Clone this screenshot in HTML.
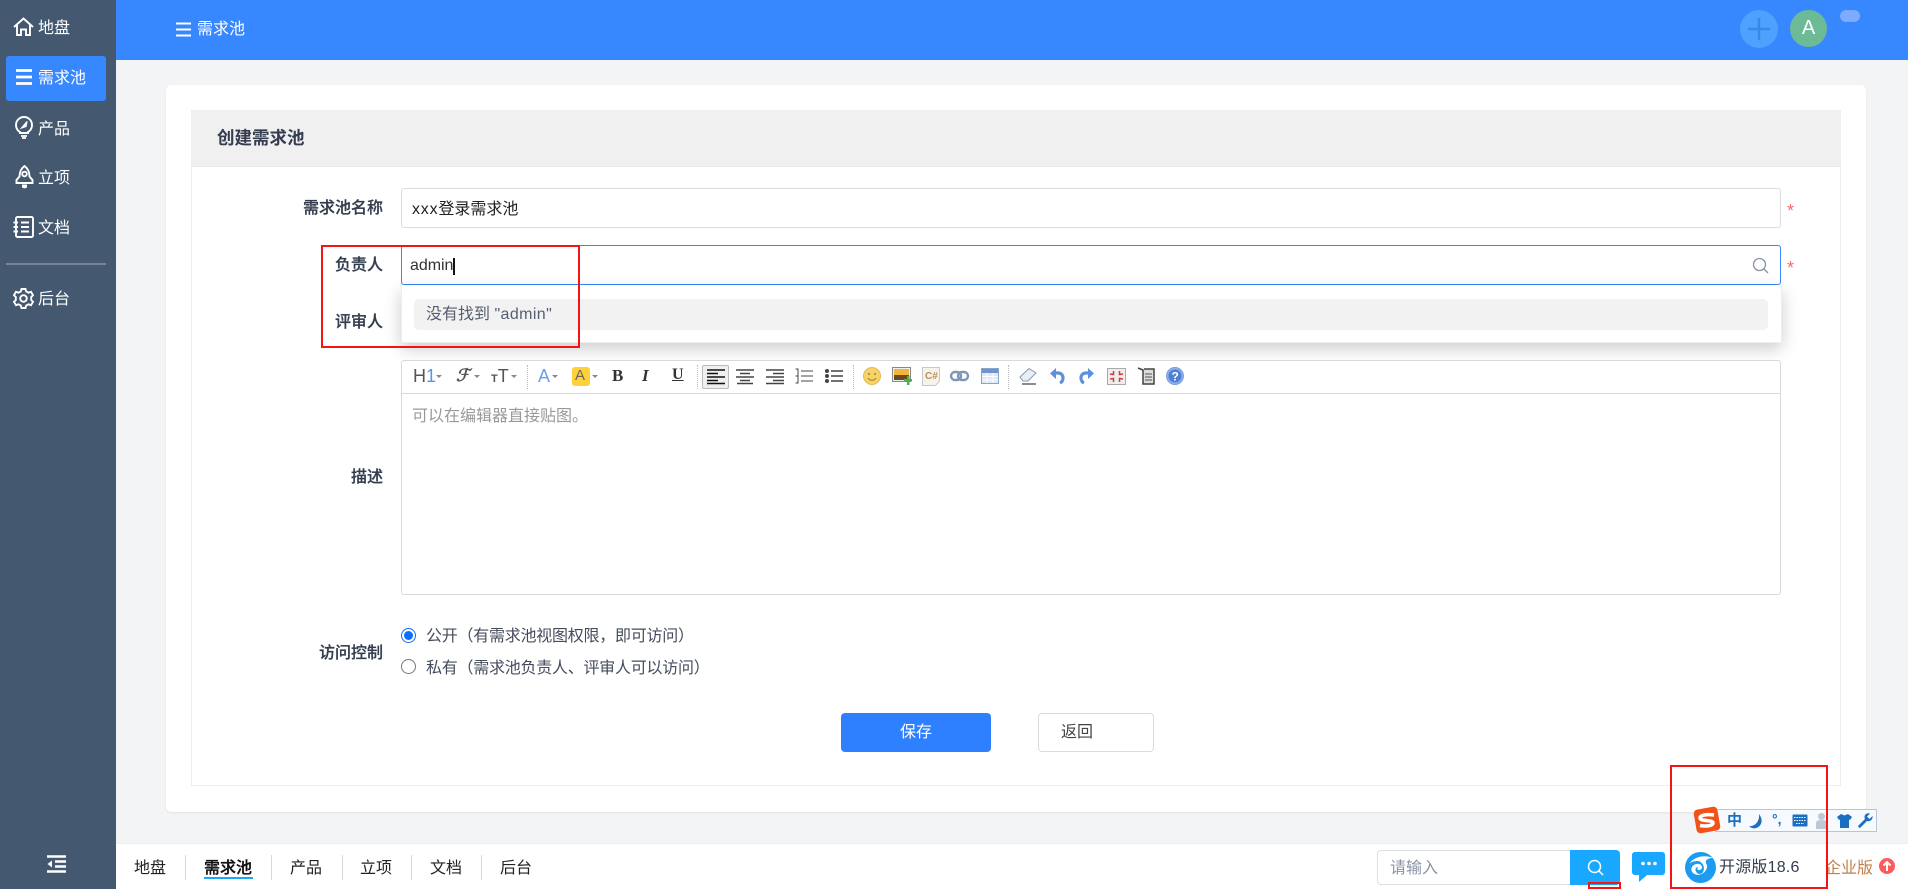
<!DOCTYPE html>
<html lang="zh-CN">
<head>
<meta charset="utf-8">
<title>创建需求池</title>
<style>
*{box-sizing:border-box;margin:0;padding:0}
html,body{width:1908px;height:889px;overflow:hidden;background:#f3f4f6}
body{position:relative;font-family:"Liberation Sans","Noto Sans CJK SC",sans-serif;font-size:16px;color:#333}
.a{position:absolute}
.t{position:absolute;line-height:24px;height:24px;white-space:nowrap;margin-top:1px}
.l{position:absolute;right:1525px;line-height:24px;height:24px;white-space:nowrap;font-weight:500;color:#333d4d;-webkit-text-stroke:.25px #333d4d;margin-top:2px}
svg{position:absolute;overflow:visible}
.nav{color:#fff;margin-top:2px}
.foot{color:#222}
.sep{position:absolute;width:1px;top:855px;height:25px;background:#d8d8d8}
.ts{position:absolute;top:365px;width:1px;height:24px;border-left:1px dotted #bbb}
.car{position:absolute;width:0;height:0;border-left:3px solid transparent;border-right:3px solid transparent;border-top:3px solid #888;top:375px}
</style>
</head>
<body>
<!-- sidebar -->
<div class="a" style="left:0;top:0;width:116px;height:889px;background:#44586f"></div>
<div class="a" style="left:6px;top:56px;width:100px;height:45px;background:#3787ff;border-radius:3px"></div>
<svg style="left:13px;top:17px" width="21" height="20" viewBox="0 0 21 20" fill="none" stroke="#fff" stroke-width="1.900"><path d="M1 10L10.500 1.500L20 10M4 8V18H8V12.500H13V18H17V8"/></svg>
<div class="t nav" style="left:38px;top:15px">地盘</div>
<svg style="left:16px;top:69px" width="16" height="16" viewBox="0 0 16 16" fill="none" stroke="#fff" stroke-width="2.800"><path d="M0 1.500H16M0 8H16M0 14.500H16"/></svg>
<div class="t nav" style="left:38px;top:65px">需求池</div>
<svg style="left:15px;top:116px" width="18" height="23" viewBox="0 0 18 23" fill="none" stroke="#fff" stroke-width="1.900"><path d="M5 16C2.500 14.500 1 12 1 9A8 8 0 0 1 17 9C17 12 15.500 14.500 13 16V17H5Z"/><path d="M6 20H12M7 22H11" stroke-width="1.800"/><path d="M6.500 12L12 5.500L11 10.500Z" fill="#fff" stroke-width="1.200"/></svg>
<div class="t nav" style="left:38px;top:116px">产品</div>
<svg style="left:15px;top:165px" width="19" height="24" viewBox="0 0 19 24" fill="none" stroke="#fff" stroke-width="1.900"><path d="M9.500 1C13.500 4 14.500 8 14.500 11.500L17.500 15V18H1.500V15L4.500 11.500C4.500 8 5.500 4 9.500 1Z"/><circle cx="9.500" cy="9" r="2.300"/><path d="M7 19.500H12V22.500L9.500 23.500L7 22.500Z" fill="#fff" stroke="none"/></svg>
<div class="t nav" style="left:38px;top:165px">立项</div>
<svg style="left:13px;top:216px" width="21" height="22" viewBox="0 0 21 22" fill="none" stroke="#fff" stroke-width="1.900"><rect x="3" y="1" width="17" height="20" rx="1.500"/><path d="M8 6.500H16M8 11H16M8 15.500H16M0.500 6.500H5M0.500 11H5M0.500 15.500H5"/></svg>
<div class="t nav" style="left:38px;top:215px">文档</div>
<div class="a" style="left:6px;top:263px;width:100px;height:2px;background:#748498"></div>
<svg style="left:13px;top:288px" width="21" height="21" viewBox="0 0 21 21" fill="none" stroke="#fff" stroke-width="1.900"><path d="M8.500 1H12.500L13.200 3.500L15.500 4.700L18 3.800L20 7.200L18.200 9V12L20 13.800L18 17.200L15.500 16.300L13.200 17.500L12.500 20H8.500L7.800 17.500L5.500 16.300L3 17.200L1 13.800L2.800 12V9L1 7.200L3 3.800L5.500 4.700L7.800 3.500Z"/><circle cx="10.500" cy="10.500" r="3.300"/></svg>
<div class="t nav" style="left:38px;top:286px">后台</div>
<svg style="left:47px;top:855px" width="19" height="18" viewBox="0 0 19 18" fill="none" stroke="#fff" stroke-width="2.400"><path d="M0 1.500H19M8 6.500H19M8 11.500H19M0 16.500H19"/><path d="M5 5.500V12.500L0.500 9Z" fill="#fff" stroke="none"/></svg>

<!-- header -->
<div class="a" style="left:116px;top:0;width:1792px;height:60px;background:#3787ff"></div>
<svg style="left:176px;top:22px" width="15" height="15" viewBox="0 0 15 15" fill="none" stroke="#fff" stroke-width="2"><path d="M0 1.500H15M0 7.500H15M0 13.500H15"/></svg>
<div class="t" style="left:197px;top:17px;color:#fff">需求池</div>
<div class="a" style="left:1740px;top:10px;width:38px;height:38px;border-radius:50%;background:#4ea1ff"></div>
<svg style="left:1748px;top:18px" width="22" height="22" viewBox="0 0 22 22" fill="none" stroke="#3a87ea" stroke-width="2.400"><path d="M11 0V22M0 11H22"/></svg>
<div class="a" style="left:1790px;top:10px;width:37px;height:37px;border-radius:50%;background:#6dba96;color:#fff;text-align:center;line-height:37px;font-size:20px">A</div>
<div class="a" style="left:1840px;top:10px;width:20px;height:12px;border-radius:6px;background:#7cabff"></div>

<!-- card -->
<div class="a" style="left:166px;top:85px;width:1700px;height:727px;background:#fff;border-radius:5px;box-shadow:0 1px 2px rgba(0,0,0,.08)"></div>
<div class="a" style="left:191px;top:110px;width:1650px;height:676px;border:1px solid #eceef0;background:#fff"></div>
<div class="a" style="left:191px;top:110px;width:1650px;height:57px;background:#f0f0f0;border-bottom:1px solid #e8e8e8"></div>
<div class="t" style="left:217px;top:125px;font-size:17.500px;font-weight:bold;color:#333d4d">创建需求池</div>

<!-- form -->
<div class="l" style="top:195px">需求池名称</div>
<div class="a" style="left:401px;top:188px;width:1380px;height:40px;border:1px solid #dcdcdc;border-radius:3px;background:#fff"></div>
<div class="t" style="left:412px;top:197px;color:#222"><span style="letter-spacing:.8px">xxx</span>登录需求池</div>
<div class="t" style="left:1787px;top:198px;color:#f56c6c;font-size:18px">*</div>

<div class="l" style="top:252px">负责人</div>
<div class="l" style="top:309px">评审人</div>
<div class="a" style="left:401px;top:245px;width:1380px;height:40px;border:1px solid #3787ff;border-radius:3px;background:#fff"></div>
<div class="t" style="left:410px;top:253px;color:#333;letter-spacing:-.05px">admin</div>
<div class="a" style="left:453px;top:258px;width:2px;height:17px;background:#111"></div>
<svg style="left:1752px;top:257px" width="17" height="17" viewBox="0 0 17 17" fill="none" stroke="#8a93a0" stroke-width="1.300"><circle cx="7.500" cy="7.500" r="6"/><path d="M12 12L16 16"/></svg>
<div class="t" style="left:1787px;top:255px;color:#f56c6c;font-size:18px">*</div>

<div class="a" style="left:401px;top:285px;width:1381px;height:58px;background:#fff;border:1px solid #eee;border-top:0;box-shadow:0 6px 16px rgba(0,0,0,.2)"></div>
<div class="a" style="left:414px;top:299px;width:1354px;height:31px;background:#f2f2f2;border-radius:5px"></div>
<div class="t" style="left:426px;top:302px;color:#555f70">没有找到 <span style="letter-spacing:.4px">"admin"</span></div>

<!-- editor -->
<div class="l" style="top:464px">描述</div>
<div class="a" style="left:401px;top:360px;width:1380px;height:235px;border:1px solid #d9d9d9;border-radius:3px;background:#fff"></div>
<div class="a" style="left:402px;top:393px;width:1378px;height:1px;background:#d9d9d9"></div>
<div class="t" style="left:412px;top:404px;color:#999">可以在编辑器直接贴图。</div>

<!-- toolbar -->
<div class="t" style="left:413px;top:363px;font-size:18px;color:#555">H<span style="color:#5a94e8">1</span></div><div class="car" style="left:436px"></div>
<div class="t" style="left:456px;top:363px;font-size:17px;font-style:italic;font-family:'Liberation Serif',serif;color:#555;font-weight:bold">ℱ</div><div class="car" style="left:474px"></div>
<div class="t" style="left:491px;top:363px;font-size:18px;color:#555"><span style="font-size:11px;font-weight:bold">T</span>T</div><div class="car" style="left:511px"></div>
<div class="ts" style="left:527px"></div>
<div class="t" style="left:538px;top:363px;font-size:18px;color:#6a9ef0">A</div><div class="car" style="left:552px"></div>
<div class="a" style="left:572px;top:367px;width:18px;height:19px;border-radius:3px;background:#ffd138"></div>
<div class="t" style="left:575px;top:363px;font-size:15px;color:#666">A</div><div class="car" style="left:592px"></div>
<div class="t" style="left:612px;top:363px;font-size:17px;font-weight:bold;font-family:'Liberation Serif',serif;color:#333">B</div>
<div class="t" style="left:642px;top:363px;font-size:17px;font-weight:bold;font-style:italic;font-family:'Liberation Serif',serif;color:#333">I</div>
<div class="t" style="left:672px;top:362px;font-size:16px;font-weight:bold;text-decoration:underline;font-family:'Liberation Serif',serif;color:#333">U</div>
<div class="ts" style="left:697px"></div>
<div class="a" style="left:702px;top:365px;width:27px;height:24px;background:#efefef;border:1px solid #bbb;border-radius:2px"></div>
<svg style="left:707px;top:369px" width="18" height="15" viewBox="0 0 18 15" fill="none" stroke="#111" stroke-width="1.500"><path d="M0 1H18M0 4.500H11M0 8H18M0 11.500H11M0 14.500H18"/></svg>
<svg style="left:736px;top:369px" width="18" height="15" viewBox="0 0 18 15" fill="none" stroke="#444" stroke-width="1.400"><path d="M0 1H18M4 4.500H14M0 8H18M4 11.500H14M1 14.500H17"/></svg>
<svg style="left:766px;top:369px" width="18" height="15" viewBox="0 0 18 15" fill="none" stroke="#444" stroke-width="1.400"><path d="M0 1H18M7 4.500H18M0 8H18M7 11.500H18M0 14.500H18"/></svg>
<svg style="left:795px;top:368px" width="18" height="16" viewBox="0 0 18 16" fill="none" stroke="#444" stroke-width="1.400"><path d="M6 3H18M6 8H18M6 13H18M0.500 1H3V15H0.500M0.500 8H3" stroke-width="1"/></svg>
<svg style="left:825px;top:368px" width="18" height="16" viewBox="0 0 18 16" fill="none" stroke="#444" stroke-width="1.400"><path d="M6 3H18M6 8H18M6 13H18"/><circle cx="2" cy="3" r="2" fill="#444" stroke="none"/><circle cx="2" cy="8" r="2" fill="#444" stroke="none"/><circle cx="2" cy="13" r="2" fill="#444" stroke="none"/></svg>
<div class="ts" style="left:853px"></div>
<svg style="left:863px;top:367px" width="18" height="18" viewBox="0 0 18 18"><circle cx="9" cy="9" r="8.500" fill="#f5d26a" stroke="#e6bb50"/><circle cx="6" cy="7" r="1" fill="#a07a20"/><circle cx="12" cy="7" r="1" fill="#a07a20"/><path d="M5 11C7 14 11 14 13 11" fill="none" stroke="#a07a20"/></svg>
<svg style="left:892px;top:367px" width="20" height="19" viewBox="0 0 20 19"><rect x="0.500" y="0.500" width="18" height="14" fill="#eee" stroke="#888"/><rect x="2" y="2" width="15" height="6" fill="#f5b53a"/><rect x="2" y="8" width="15" height="5" fill="#6a4a20"/><path d="M15 9H17.500V12H20V14.500H17.500V18H15V14.500H12V12H15Z" fill="#4caf50"/></svg>
<svg style="left:922px;top:367px" width="18" height="19" viewBox="0 0 18 19"><path d="M0.500 0.500H17.500V14L13.500 18.500H0.500Z" fill="#f6f3ec" stroke="#c8c8c8"/><text x="3" y="12" font-size="10" font-weight="bold" font-family="Liberation Sans" fill="#b89058">C#</text></svg>
<svg style="left:950px;top:370px" width="19" height="12" viewBox="0 0 19 12" fill="none" stroke="#7d95b8" stroke-width="2.400"><rect x="1" y="2" width="10" height="8" rx="4"/><rect x="8" y="2" width="10" height="8" rx="4"/></svg>
<svg style="left:981px;top:368px" width="18" height="16" viewBox="0 0 18 16"><rect x="0.500" y="0.500" width="17" height="15" fill="#dfe8f5" stroke="#8aa4cc"/><rect x="1" y="1" width="16" height="4" fill="#6f93cf"/><path d="M6 5V15M12 5V15M1 8.500H17M1 12H17" stroke="#fff" fill="none"/></svg>
<div class="ts" style="left:1008px"></div>
<svg style="left:1019px;top:367px" width="18" height="18" viewBox="0 0 18 18"><path d="M1 10L10 1.500L17 6L9 14H4Z" fill="#e8eef6" stroke="#8a9ab0"/><path d="M3 17H17" stroke="#666" stroke-width="1.500"/></svg>
<svg style="left:1049px;top:368px" width="16" height="16" viewBox="0 0 16 16" fill="none" stroke="#5f8fd8" stroke-width="3.200"><path d="M4 5H9C12 5 14 7 14 10C14 12 13 14 11 15"/><path d="M7 0L1 5.500L7 11" fill="#5f8fd8" stroke="none"/></svg>
<svg style="left:1079px;top:368px" width="16" height="16" viewBox="0 0 16 16" fill="none" stroke="#5f8fd8" stroke-width="3.200"><path d="M12 5H7C4 5 2 7 2 10C2 12 3 14 5 15"/><path d="M9 0L15 5.500L9 11" fill="#5f8fd8" stroke="none"/></svg>
<svg style="left:1107px;top:368px" width="19" height="17" viewBox="0 0 19 17"><rect x="0.500" y="0.500" width="18" height="16" fill="#f1eded" stroke="#aaa"/><path d="M3 6L6.500 6.500L6.500 3M16 6L12.500 6.500L12.500 3M3 11L6.500 10.500L6.500 14M16 11L12.500 10.500L12.500 14" fill="none" stroke="#c84040" stroke-width="1.500"/></svg>
<svg style="left:1138px;top:367px" width="17" height="18" viewBox="0 0 17 18"><path d="M0 1L5 3V17H16V2H6" fill="#ddd" stroke="#444" stroke-width="1.500"/><path d="M7 7H14M7 10H14M7 13H14" stroke="#555"/></svg>
<svg style="left:1166px;top:367px" width="18" height="18" viewBox="0 0 18 18"><circle cx="9" cy="9" r="8.500" fill="#8fb0e8" stroke="#7c9ed8"/><circle cx="9" cy="9" r="6.500" fill="#4d7fd6"/><text x="5.500" y="13.500" font-size="12" font-weight="bold" font-family="Liberation Sans" fill="#fff">?</text></svg>

<!-- radios -->
<div class="l" style="top:640px">访问控制</div>
<div class="a" style="left:401px;top:628px;width:15px;height:15px;border-radius:50%;border:1.500px solid #0d6efd;background:#fff"></div>
<div class="a" style="left:404px;top:631px;width:9px;height:9px;border-radius:50%;background:#0d6efd"></div>
<div class="t" style="left:426px;top:624px;color:#444c5c;letter-spacing:-.25px">公开（有需求池视图权限，即可访问）</div>
<div class="a" style="left:401px;top:659px;width:15px;height:15px;border-radius:50%;border:1.500px solid #777;background:#fff"></div>
<div class="t" style="left:426px;top:656px;color:#444c5c;letter-spacing:-.25px">私有（需求池负责人、评审人可以访问）</div>

<!-- buttons -->
<div class="a" style="left:841px;top:713px;width:150px;height:39px;background:#2f80ff;border-radius:4px;color:#fff;text-align:center;line-height:39px">保存</div>
<div class="a" style="left:1038px;top:713px;width:116px;height:39px;background:#fff;border:1px solid #dcdcdc;border-radius:4px;color:#444;line-height:37px;padding-left:22px">返回</div>

<!-- footer -->
<div class="a" style="left:116px;top:843px;width:1792px;height:46px;background:#fff;border-top:1px solid #eee"></div>
<div class="t foot" style="left:134px;top:856px">地盘</div><div class="sep" style="left:185px"></div>
<div class="t foot" style="left:204px;top:856px;font-weight:500;color:#111;-webkit-text-stroke:.3px #111">需求池</div><div class="sep" style="left:271px"></div>
<div class="a" style="left:204px;top:877px;width:49px;height:2px;background:#18a8ff"></div>
<div class="t foot" style="left:290px;top:856px">产品</div><div class="sep" style="left:342px"></div>
<div class="t foot" style="left:360px;top:856px">立项</div><div class="sep" style="left:411px"></div>
<div class="t foot" style="left:430px;top:856px">文档</div><div class="sep" style="left:481px"></div>
<div class="t foot" style="left:500px;top:856px">后台</div>

<div class="a" style="left:1377px;top:850px;width:194px;height:35px;background:#fff;border:1px solid #dcdfe6;border-right:0;border-radius:4px 0 0 4px"></div>
<div class="t" style="left:1390px;top:856px;color:#8a93a5">请输入</div>
<div class="a" style="left:1570px;top:850px;width:50px;height:35px;background:#18a8ff;border-radius:0 4px 4px 0"></div>
<svg style="left:1587px;top:859px" width="17" height="17" viewBox="0 0 17 17" fill="none" stroke="#fff" stroke-width="1.500"><circle cx="7.500" cy="7.500" r="6"/><path d="M12 12L16 16"/></svg>
<svg style="left:1632px;top:852px" width="33" height="31" viewBox="0 0 33 31"><path d="M3 0H30C31.700 0 33 1.300 33 3V20C33 21.700 31.700 23 30 23H15L7 30V23H3C1.300 23 0 21.700 0 20V3C0 1.300 1.300 0 3 0Z" fill="#18a8ff"/><circle cx="11" cy="11.500" r="1.800" fill="#fff"/><circle cx="17" cy="11.500" r="1.800" fill="#fff"/><circle cx="23" cy="11.500" r="1.800" fill="#fff"/></svg>
<svg style="left:1685px;top:852px" width="31" height="31" viewBox="0 0 31 31"><circle cx="15.500" cy="15.500" r="15.500" fill="#1c9cf0"/><path d="M4 12C10 3 22 3 28 6C22 6 19 9 22 13C23 20 14 26 8 21C4 17 8 11 14 12C18 13 18 18 14 18C12 18 12 16 13 15C9 15 10 22 15 22C21 21 20 10 13 9C9 9 6 10 4 12Z" fill="#fff"/></svg>
<div class="t" style="left:1719px;top:855px;color:#333d4d;letter-spacing:.2px">开源版18.6</div>
<div class="t" style="left:1825px;top:856px;color:#c1804b">企业版</div>
<svg style="left:1879px;top:858px" width="16" height="16" viewBox="0 0 16 16"><circle cx="8" cy="8" r="8" fill="#fc5c5c"/><path d="M8 13V4M4.500 7.500L8 4L11.500 7.500" fill="none" stroke="#fff" stroke-width="2"/></svg>

<!-- sogou IME -->
<div class="a" style="left:1715px;top:809px;width:162px;height:23px;background:#f6f9fd;border:1px solid #b9c6d6"></div>
<svg style="left:1693px;top:806px" width="28" height="28" viewBox="0 0 28 28"><rect x="2" y="2" width="24" height="24" rx="4" transform="rotate(-10 14 14)" fill="#f2521a"/><path d="M21 9C14 8 7 9 7 12C7 15.500 20 13.500 20 17C20 20 13 20.500 7 19.500" fill="none" stroke="#fff" stroke-width="3.500"/></svg>
<div class="t" style="left:1727px;top:808px;font-size:15px;font-weight:bold;color:#1a6fc0">中</div>
<svg style="left:1749px;top:814px" width="14" height="15" viewBox="0 0 14 15"><path d="M10 0C13 4 14 9 10 12.500C7 15 2.500 15 0 12C5 13 11 8 10 0Z" fill="#1a6fc0"/></svg>
<div class="t" style="left:1772px;top:806px;font-size:14px;font-weight:bold;color:#1a6fc0">°,</div>
<svg style="left:1792px;top:814px" width="16" height="14" viewBox="0 0 16 14"><rect x="0.500" y="0.500" width="15" height="12" rx="1" fill="#1a6fc0"/><path d="M2 3.500H14M2 6.500H14M4 9.500H12" stroke="#fff" stroke-dasharray="1.500 1"/></svg>
<svg style="left:1816px;top:813px" width="11" height="16" viewBox="0 0 11 16"><circle cx="5.500" cy="3.500" r="3.500" fill="#bcc8d6"/><path d="M0 16V10C0 8 2 7 5.500 7C9 7 11 8 11 10V16Z" fill="#bcc8d6"/></svg>
<svg style="left:1837px;top:814px" width="15" height="14" viewBox="0 0 15 14"><path d="M4 0L7.500 1.500L11 0L15 3L13 6L12 5.500V14H3V5.500L2 6L0 3Z" fill="#1a6fc0"/></svg>
<svg style="left:1858px;top:813px" width="15" height="15" viewBox="0 0 15 15"><path d="M14.500 3L11.500 6L9 3.500L12 0.500C9.500 -0.500 6.500 1 6.500 4C6.500 5 6.700 5.500 7 6L0.500 12.500C0 13 0 13.500 0.500 14L1 14.500C1.500 15 2 15 2.500 14.500L9 8C12 9 15 6.500 14.500 3Z" fill="#1a6fc0"/></svg>

<!-- red annotation boxes -->
<div class="a" style="left:321px;top:245px;width:259px;height:103px;border:2px solid #f51313"></div>
<div class="a" style="left:1670px;top:765px;width:158px;height:124px;border:2px solid #f51313"></div>
<div class="a" style="left:1588px;top:882px;width:33px;height:7px;border:2px solid #f51313"></div>
</body>
</html>
